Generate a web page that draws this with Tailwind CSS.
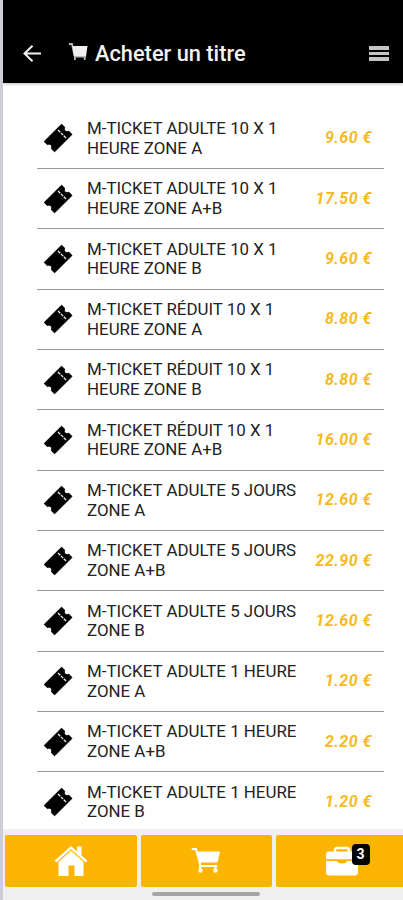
<!DOCTYPE html>
<html lang="fr">
<head>
<meta charset="utf-8">
<title>Acheter un titre</title>
<script src="https://cdn.jsdelivr.net/npm/@tailwindcss/browser@4"></script>
</head>
<body class="bg-white">
<svg class="hidden">
  <symbol id="ticket" viewBox="0 0 30 30">
    <path fill="#000" d="M18.6 1.2 L21.6 4.2 C20.6 7.6 22.6 9.4 25.8 8.300 L29 11.4 L11.6 28.8 L8.400 25.700 C9.400 22.400 7.600 20.500 4.300 21.500 L1.200 18.500 Z" stroke="#000" stroke-width="1" stroke-linejoin="round"/>
    <path d="M15 7 L23.600 15.600" stroke="#eee" stroke-width="1.300" stroke-dasharray="3.200 .9" fill="none"/>
  </symbol>
  <symbol id="cart" viewBox="0 0 30 27">
    <path d="M1.500 2 H5 L9.500 19 H25.500" fill="none" stroke="currentColor" stroke-width="2" stroke-linecap="round" stroke-linejoin="round"/>
    <path d="M6 4.500 H28 Q29 4.500 28.800 5.500 L26.500 15.500 H9 Z" fill="currentColor"/>
    <path d="M9 18v4M24.500 18v4" stroke="currentColor" stroke-width="2"/>
    <circle cx="9.500" cy="23.500" r="2.200" fill="currentColor"/><circle cx="24.500" cy="23.500" r="2.200" fill="currentColor"/>
  </symbol>
</svg>
<div class="flex h-[900px] w-[403px] flex-col overflow-hidden border-l-[3px] border-[#cfccd9] bg-white font-['Roboto',sans-serif]">
  <header class="flex h-[83px] shrink-0 items-center bg-black pt-[24px] pr-[14px] pl-[20px] text-[#f2f2f2] shadow-[0_1px_3px_#bbb]">
    <svg class="h-[18px] w-[18px]" viewBox="0 0 18 18" fill="none" stroke="currentColor" stroke-width="2"><path d="M18 8.500H1.500M9.500 .8L1.500 8.500l8 7.700"/></svg>
    <svg class="-mt-[3px] ml-[28px] h-[18px] w-[19px]" viewBox="0 0 19 18" fill="none"><path d="M0 1H3L5.500 13" stroke="#bbb" stroke-width="1.800"/><path d="M3.500 3H18.500L17 13.500H5Z" fill="#f0f0f0"/><path d="M5 13.500h1.800V17H5zM14.800 13.500h1.800V17h-1.800zM5 13h12v1.500H5z" fill="#bbb"/></svg>
    <h1 class="ml-[7px] flex-1 text-[21.8px] leading-[26px] font-medium whitespace-nowrap">Acheter un titre</h1>
    <div class="flex w-[20px] flex-col gap-[2px]"><i class="h-[3.4px] bg-[#c4c4c4]"></i><i class="h-[3.4px] bg-[#c4c4c4]"></i><i class="h-[3.4px] bg-[#c4c4c4]"></i></div>
  </header>
  <main id="list" class="min-h-0 flex-1 overflow-hidden pt-[25.6px] pr-[19px] pl-[33.5px]"></main>
  <footer class="h-[71px] shrink-0 bg-[#efefef] pt-[5.500px] pl-[2px]">
    <nav class="flex h-[52px] text-white">
      <a class="mr-[4px] flex w-[131.500px] shrink-0 items-center justify-center rounded-[2px] bg-[#fbb500]">
        <svg class="h-[32px] w-[34px]" viewBox="0 0 34 32"><path d="M1.500 16.500 L17 2.500 L32.500 16.500" fill="none" stroke="#fff" stroke-width="2.400"/><path d="M23 1.500h4.500v9L23 6.500z" fill="#fff"/><path d="M4.500 17 L17 5.800 L29.500 17 V31 H20.500 V20.500 H14.500 V31 H4.500Z" fill="#fff"/></svg>
      </a>
      <a class="mr-[4px] flex w-[131.500px] shrink-0 items-center justify-center rounded-[2px] bg-[#fbb500]">
        <svg class="h-[27px] w-[30px]"><use href="#cart"/></svg>
      </a>
      <a class="flex w-[131px] shrink-0 items-center justify-center rounded-l-[2px] bg-[#fbb500]">
        <span class="relative">
          <svg class="h-[30px] w-[34px]" viewBox="0 0 34 30"><path d="M10 6V4.500Q10 2 12.500 2H21.500Q24 2 24 4.500V6" fill="none" stroke="#fff" stroke-width="2.400"/><path d="M1 13.300V8.500Q1 5.500 4 5.500H30Q33 5.500 33 8.500V13.300Z" fill="#fff"/><path d="M1 15H12Q13 17.500 17 17.500Q21 17.500 22 15H33V26Q33 29.500 29.500 29.500H4.500Q1 29.500 1 26Z" fill="#fff"/></svg>
          <b class="absolute -top-[2px] left-[27px] flex h-[21px] w-[18px] items-center justify-center rounded-[4px] bg-black text-[14px] leading-none font-bold">3</b>
        </span>
      </a>
    </nav>
    <div class="mt-[5.500px] ml-[147px] h-[4px] w-[108px] rounded-full bg-[#a3a5a7]"></div>
  </footer>
</div>
<script>
const tickets = [
  ["M-TICKET ADULTE 10 X 1", "HEURE ZONE A", "9.60 €"],
  ["M-TICKET ADULTE 10 X 1", "HEURE ZONE A+B", "17.50 €"],
  ["M-TICKET ADULTE 10 X 1", "HEURE ZONE B", "9.60 €"],
  ["M-TICKET RÉDUIT 10 X 1", "HEURE ZONE A", "8.80 €"],
  ["M-TICKET RÉDUIT 10 X 1", "HEURE ZONE B", "8.80 €"],
  ["M-TICKET RÉDUIT 10 X 1", "HEURE ZONE A+B", "16.00 €"],
  ["M-TICKET ADULTE 5 JOURS", "ZONE A", "12.60 €"],
  ["M-TICKET ADULTE 5 JOURS", "ZONE A+B", "22.90 €"],
  ["M-TICKET ADULTE 5 JOURS", "ZONE B", "12.60 €"],
  ["M-TICKET ADULTE 1 HEURE", "ZONE A", "1.20 €"],
  ["M-TICKET ADULTE 1 HEURE", "ZONE A+B", "2.20 €"],
  ["M-TICKET ADULTE 1 HEURE", "ZONE B", "1.20 €"]
];
document.getElementById("list").innerHTML = tickets.map(([a, b, p]) => `
  <div class="flex h-[60.33px] items-center border-b-[1.5px] border-[#9a9a9a] pr-[12px] pl-[6px]">
    <svg class="h-[30px] w-[30px] shrink-0"><use href="#ticket"/></svg>
    <p class="ml-[14.5px] flex-1 pt-[1px] text-[16.9px] leading-[19.7px] whitespace-nowrap text-[#222]">${a}<br>${b}</p>
    <span class="text-[16px] font-bold tracking-[0.5px] whitespace-nowrap text-[#f8b91c] italic">${p}</span>
  </div>`).join("");
</script>
</body>
</html>
